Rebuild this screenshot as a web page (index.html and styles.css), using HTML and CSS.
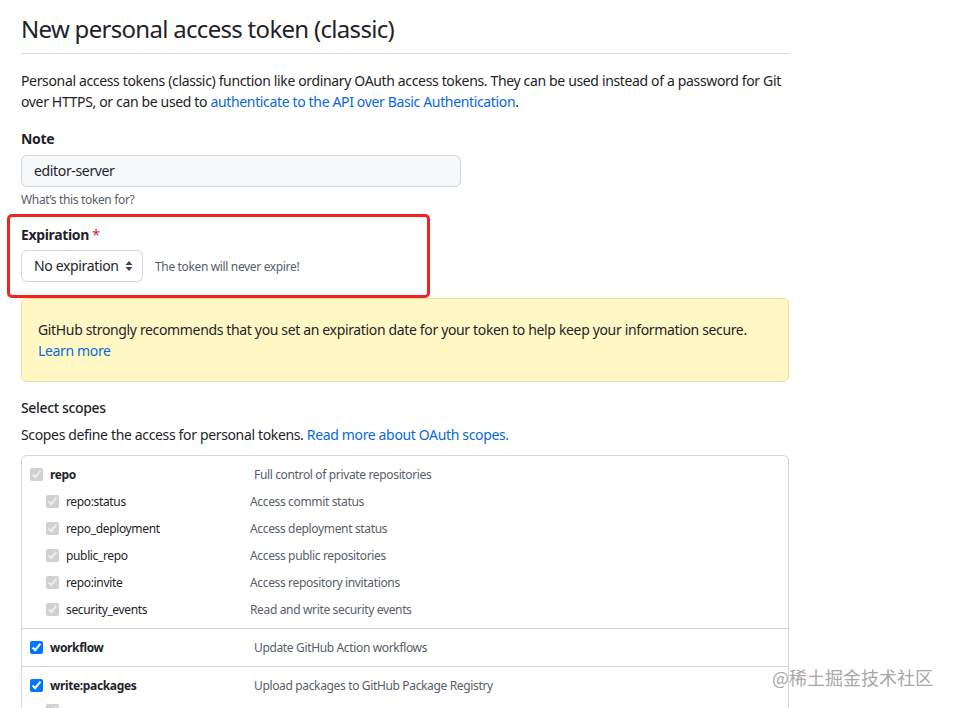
FILE: index.html
```html
<!DOCTYPE html>
<html lang="en">
<head>
<meta charset="utf-8">
<title>New personal access token (classic)</title>
<link rel="stylesheet" href="styles.css">
</head>
<body>
<main class="page">
  <h1 class="subhead">New personal access token (classic)</h1>
  <p class="intro">Personal access tokens (classic) function like ordinary OAuth access tokens. They can be used instead of a password for Git over HTTPS, or can be used to <a href="#">authenticate to the API over Basic Authentication</a>.</p>

  <div class="form-group">
    <label class="label">Note</label>
    <div class="input">editor-server</div>
    <p class="note">What’s this token for?</p>
  </div>

  <div class="form-group expiration">
    <label class="label">Expiration <span class="req">*</span></label>
    <div class="exp-row">
      <div class="select">
        <span>No expiration</span>
        <svg class="caret" width="8" height="12" viewBox="0 0 8 12"><path d="M4 1 L7.5 5 H0.5 Z M4 11 L0.5 7 H7.5 Z" fill="#3d444d"/></svg>
      </div>
      <span class="exp-note">The token will never expire!</span>
    </div>
    <div class="annotation"></div>
  </div>

  <div class="flash">
    GitHub strongly recommends that you set an expiration date for your token to help keep your information secure.<br>
    <a href="#">Learn more</a>
  </div>

  <h3 class="scopes-title">Select scopes</h3>
  <p class="scopes-desc">Scopes define the access for personal tokens. <a href="#">Read more about OAuth scopes.</a></p>

  <div class="scopes">
    <div class="group">
      <div class="row top"><input type="checkbox" checked disabled><span class="name strong">repo</span><span class="desc">Full control of private repositories</span></div>
      <div class="row sub"><input type="checkbox" checked disabled><span class="name">repo:status</span><span class="desc">Access commit status</span></div>
      <div class="row sub"><input type="checkbox" checked disabled><span class="name">repo_deployment</span><span class="desc">Access deployment status</span></div>
      <div class="row sub"><input type="checkbox" checked disabled><span class="name">public_repo</span><span class="desc">Access public repositories</span></div>
      <div class="row sub"><input type="checkbox" checked disabled><span class="name">repo:invite</span><span class="desc">Access repository invitations</span></div>
      <div class="row sub"><input type="checkbox" checked disabled><span class="name">security_events</span><span class="desc">Read and write security events</span></div>
    </div>
    <div class="group">
      <div class="row top"><input type="checkbox" checked><span class="name strong">workflow</span><span class="desc">Update GitHub Action workflows</span></div>
    </div>
    <div class="group">
      <div class="row top"><input type="checkbox" checked><span class="name strong">write:packages</span><span class="desc">Upload packages to GitHub Package Registry</span></div>
      <div class="row sub low"><input type="checkbox" checked disabled><span class="name">read:packages</span><span class="desc">Download packages from GitHub Package Registry</span></div>
    </div>
  </div>
</main>
<div class="watermark">@稀土掘金技术社区</div>
</body>
</html>
```

FILE: styles.css
```css
* { box-sizing: border-box; }
html, body { margin: 0; padding: 0; background: #fff; }
body {
  font-family: "Noto Sans", "Open Sans", "Noto Sans CJK SC", sans-serif;
  font-size: 14px;
  line-height: 21px;
  letter-spacing: -0.025em;
  color: #1f2328;
  overflow: hidden;
  height: 708px;
}
a { color: #0969da; text-decoration: none; }

.page {
  width: 789px;
  padding-left: 21px;
}

.subhead {
  margin: 0;
  padding-top: 11px;
  padding-bottom: 6px;
  font-size: 24px;
  line-height: 36px;
  font-weight: 400;
  letter-spacing: -0.7px;
  border-bottom: 1px solid #d8dee4;
}

.intro {
  margin: 16px 0 16px;
}

.form-group { margin: 0 0 15px; }
.label {
  display: block;
  font-weight: 700;
  line-height: 21px;
}
.req { color: #cf222e; font-weight: 400; }

.input {
  margin-top: 6px;
  width: 440px;
  height: 32px;
  padding: 5px 12px;
  line-height: 20px;
  background: #f6f8fa;
  border: 1px solid #d0d7de;
  border-radius: 6px;
}
.note {
  margin: 4px 0 0;
  font-size: 12px;
  line-height: 18px;
  color: #57606a;
}

.expiration { position: relative; margin-bottom: 16px; }
.exp-row {
  margin-top: 5px;
  display: flex;
  align-items: center;
  gap: 12px;
}
.select {
  width: 122px;
  height: 32px;
  padding: 0 9px 0 12px;
  display: flex;
  align-items: center;
  justify-content: space-between;
  border: 1px solid #d0d7de;
  border-radius: 6px;
  background: #fff;
  line-height: 20px;
}
.exp-note {
  font-size: 12px;
  color: #57606a;
}
.annotation {
  position: absolute;
  left: -14px;
  top: -10px;
  width: 423px;
  height: 84px;
  border: 3px solid #f52222;
  border-radius: 5px;
  pointer-events: none;
}

.flash {
  width: 768px;
  padding: 20px 16px;
  background: #fff8c5;
  border: 1px solid #ecdb9c;
  border-radius: 6px;
}

.scopes-title {
  margin: 15px 0 6px;
  font-size: 14px;
  line-height: 21px;
  font-weight: 500;
}
.scopes-desc { margin: 0 0 10px; }

.scopes {
  width: 768px;
  border: 1px solid #d0d7de;
  border-radius: 6px;
  font-size: 12px;
}
.group {
  padding: 5px 0;
  border-top: 1px solid #d0d7de;
}
.group:first-child { border-top: 0; }

.row {
  display: flex;
  align-items: center;
  height: 27px;
}
.row input {
  margin: 0 7px 0 0;
  width: 13px;
  height: 13px;
  flex: none;
}
.row.top { padding-left: 8px; }
.row.sub { padding-left: 24px; }
.row.top .name { width: 204px; }
.row.sub .name { width: 184px; }
.row.low { align-items: flex-start; }
.row.low input { margin-top: 5px; }
.row.low .name, .row.low .desc { padding-top: 9px; }
.name { flex: none; color: #1f2328; }
.strong { font-weight: 700; }
.desc { color: #57606a; }

.watermark {
  position: absolute;
  left: 772px;
  top: 664px;
  font-family: "Noto Sans CJK SC", sans-serif;
  font-size: 18px;
  line-height: 26px;
  letter-spacing: 0;
  color: #a8a8a8;
  text-shadow: 0 0 1px #fff, 0 0 1px #fff;
}
```
